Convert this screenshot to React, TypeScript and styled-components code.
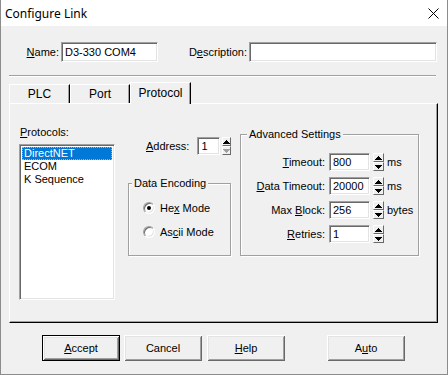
import React from 'react';
import styled, { createGlobalStyle, css } from 'styled-components';

const GlobalStyle = createGlobalStyle`
  html, body { margin: 0; padding: 0; background: #f0f0f0; }
  body { font-family: "Liberation Sans", Arial, sans-serif; font-size: 11px; color: #000; }
  * { box-sizing: border-box; }
  u { text-decoration: underline; text-underline-offset: 1px; }
`;

const Window = styled.div`
  width: 448px;
  height: 375px;
  display: flex;
  flex-direction: column;
  background: #f0f0f0;
  border: 1px solid #8c8c8c;
  border-top: none;
  overflow: hidden;
`;

const TitleBar = styled.div`
  height: 26px;
  flex: none;
  background: #fff;
  display: flex;
  align-items: center;
  padding-left: 4px;
`;

const Title = styled.span`
  font-family: "Noto Sans", "Open Sans", sans-serif;
  font-size: 12px;
  color: #000;
`;

const CloseGlyph = styled.svg`
  margin-left: auto;
  margin-right: 8px;
`;

const NameRow = styled.div`
  margin-top: 16px;
  padding-left: 24px;
  display: grid;
  grid-template-columns: 36px 97px 91px 188px;
  align-items: center;
`;

const FieldLabel = styled.label`
  text-align: right;
  padding-right: 2px;
  line-height: 20px;
  white-space: nowrap;
`;

const TextBox = styled.div<{ $w?: number; $h?: number }>`
  width: ${p => (p.$w ? `${p.$w}px` : '100%')};
  height: ${p => p.$h ?? 20}px;
  background: #fff;
  border: 1px solid;
  border-color: #a0a0a0 #fff #fff #a0a0a0;
  box-shadow: inset 1px 1px #696969, inset -1px -1px #e3e3e3;
  padding: 0 3px;
  display: flex;
  align-items: center;
  white-space: nowrap;
`;

const Separator = styled.div`
  margin: 13px 0 0 8px;
  width: 427px;
  height: 2px;
  border-top: 1px solid #a0a0a0;
  border-bottom: 1px solid #fff;
`;

const TabStrip = styled.div`
  margin: 5px 0 0 8px;
  height: 21px;
  display: flex;
  align-items: flex-end;
`;

const Tab = styled.div<{ $active?: boolean; $w: number }>`
  width: ${p => p.$w}px;
  height: 19px;
  background: #f0f0f0;
  border-top: 1px solid #fff;
  border-left: 1px solid #fff;
  border-right: 1px solid #000;
  box-shadow: inset -1px 0 #a0a0a0;
  font-size: 12px;
  display: flex;
  align-items: center;
  justify-content: center;
  ${p =>
    p.$active &&
    css`
      height: 22px;
      margin-bottom: -1px;
      position: relative;
      z-index: 1;
      padding-bottom: 2px;
    `}
`;

const Panel = styled.div`
  margin-left: 8px;
  width: 429px;
  height: 220px;
  flex: none;
  border: 1px solid;
  border-color: #fff #000 #000 #fff;
  box-shadow: inset -1px -1px #a0a0a0;
  padding-left: 9px;
  display: flex;
  align-items: flex-start;
`;

const ProtocolColumn = styled.div`
  width: 96px;
  padding-top: 22px;
  display: flex;
  flex-direction: column;
`;

const ColumnLabel = styled.div`
  line-height: 13px;
  padding-left: 1px;
`;

const ListBox = styled.div`
  margin-top: 5px;
  height: 156px;
  background: #fff;
  border: 1px solid;
  border-color: #a0a0a0 #fff #fff #a0a0a0;
  box-shadow: inset 1px 1px #696969, inset -1px -1px #e3e3e3;
  padding: 2px;
`;

const ListItem = styled.div<{ $selected?: boolean }>`
  height: 13px;
  line-height: 13px;
  padding-left: 2px;
  white-space: nowrap;
  ${p =>
    p.$selected &&
    css`
      background: #0078d7;
      color: #fff;
      outline: 1px dotted #ff9a4a;
      outline-offset: -1px;
    `}
`;

const MiddleColumn = styled.div`
  width: 103px;
  margin-left: 13px;
  padding-top: 33px;
  display: flex;
  flex-direction: column;
`;

const AddressRow = styled.div`
  margin-left: 18px;
  display: flex;
  align-items: center;
  white-space: nowrap;
`;

const InlineLabel = styled.span`
  margin-right: 8px;
`;

const GroupBox = styled.fieldset<{ $w: number; $pl: number; $pt: number; $pb: number }>`
  margin: 0;
  min-width: 0;
  width: ${p => p.$w}px;
  padding: ${p => `${p.$pt}px 0 ${p.$pb}px ${p.$pl}px`};
  border: 1px solid #a0a0a0;
  box-shadow: inset 1px 1px #fff, 1px 1px #fff;
`;

const GroupTitle = styled.legend`
  padding: 0 2px;
  line-height: 13px;
  background: #f0f0f0;
  white-space: nowrap;
`;

const EncodingGroup = styled(GroupBox)`
  margin-top: 22px;
`;

const AdvancedGroup = styled(GroupBox)`
  margin-left: 9px;
  margin-top: 24px;
`;

const RadioList = styled.div`
  margin-left: 11px;
  display: flex;
  flex-direction: column;
  gap: 10px;
`;

const RadioRow = styled.div`
  height: 14px;
  display: flex;
  align-items: center;
  gap: 5px;
  white-space: nowrap;
`;

const RadioCircle = styled.span<{ $checked?: boolean }>`
  width: 12px;
  height: 12px;
  flex: none;
  border-radius: 50%;
  background: #fff;
  position: relative;
  border: 1px solid;
  border-color: #a0a0a0 #fff #fff #a0a0a0;
  box-shadow: inset 1px 1px #696969, inset -1px -1px #e3e3e3;
  ${p =>
    p.$checked &&
    css`
      &::after {
        content: '';
        position: absolute;
        left: 3px;
        top: 3px;
        width: 4px;
        height: 4px;
        border-radius: 50%;
        background: #000;
      }
    `}
`;

const SettingsGrid = styled.div`
  display: grid;
  grid-template-columns: 82px 41px 14px auto;
  grid-auto-rows: 18px;
  row-gap: 6px;
  align-items: center;
`;

const SettingLabel = styled.span`
  text-align: right;
  padding-right: 4px;
  white-space: nowrap;
`;

const Unit = styled.span`
  padding-left: 3px;
`;

const SpinBox = styled.div<{ $gap?: number }>`
  width: 11px;
  height: 18px;
  margin-left: ${p => p.$gap ?? 0}px;
  justify-self: end;
  display: flex;
  flex-direction: column;
`;

const SpinHalf = styled.div`
  flex: 1;
  display: flex;
  align-items: center;
  justify-content: center;
  background: #f0f0f0;
  border: 1px solid;
  border-color: #fff #696969 #696969 #fff;
`;

const ButtonRow = styled.div`
  margin-top: 12px;
  padding-left: 41px;
  display: flex;
`;

const Button = styled.button<{ $default?: boolean; $gap?: number }>`
  width: 78px;
  height: 26px;
  margin: 0 0 0 ${p => p.$gap ?? 0}px;
  padding: 0;
  font: inherit;
  color: #000;
  background: #f0f0f0;
  border: none;
  box-shadow: inset 1px 1px #fff, inset -1px -1px #696969, inset 2px 2px #e3e3e3, inset -2px -2px #a0a0a0;
  ${p =>
    p.$default &&
    css`
      border: 1px solid #000;
    `}
`;

const Arrow: React.FC<{ dir: 'up' | 'down'; disabled?: boolean }> = ({ dir, disabled }) => (
  <svg width="7" height="4" viewBox="0 0 7 4" shapeRendering="crispEdges" fill={disabled ? '#a0a0a0' : '#000'}>
    {dir === 'up' ? (
      <path d="M3 0h1v1H3zM2 1h3v1H2zM1 2h5v1H1zM0 3h7v1H0z" />
    ) : (
      <path d="M0 0h7v1H0zM1 1h5v1H1zM2 2h3v1H2zM3 3h1v1H3z" />
    )}
  </svg>
);

const Spinner: React.FC<{ gap?: number; downDisabled?: boolean }> = ({ gap, downDisabled }) => (
  <SpinBox $gap={gap}>
    <SpinHalf>
      <Arrow dir="up" />
    </SpinHalf>
    <SpinHalf>
      <Arrow dir="down" disabled={downDisabled} />
    </SpinHalf>
  </SpinBox>
);

const settings: { label: React.ReactNode; value: string; unit?: string }[] = [
  { label: <><u>T</u>imeout:</>, value: '800', unit: 'ms' },
  { label: <><u>D</u>ata Timeout:</>, value: '20000', unit: 'ms' },
  { label: <>Max <u>B</u>lock:</>, value: '256', unit: 'bytes' },
  { label: <><u>R</u>etries:</>, value: '1' },
];

export default function App() {
  return (
    <>
      <GlobalStyle />
      <Window>
        <TitleBar>
          <Title>Configure Link</Title>
          <CloseGlyph width="11" height="11" viewBox="0 0 11 11">
            <path d="M0.5 0.5L10.5 10.5M10.5 0.5L0.5 10.5" stroke="#000" strokeWidth="1" />
          </CloseGlyph>
        </TitleBar>

        <NameRow>
          <FieldLabel><u>N</u>ame:</FieldLabel>
          <TextBox>D3-330 COM4</TextBox>
          <FieldLabel>D<u>e</u>scription:</FieldLabel>
          <TextBox />
        </NameRow>

        <Separator />

        <TabStrip>
          <Tab $w={61}>PLC</Tab>
          <Tab $w={60}>Port</Tab>
          <Tab $w={61} $active>Protocol</Tab>
        </TabStrip>

        <Panel>
          <ProtocolColumn>
            <ColumnLabel><u>P</u>rotocols:</ColumnLabel>
            <ListBox>
              <ListItem $selected>DirectNET</ListItem>
              <ListItem>ECOM</ListItem>
              <ListItem>K Sequence</ListItem>
            </ListBox>
          </ProtocolColumn>

          <MiddleColumn>
            <AddressRow>
              <InlineLabel><u>A</u>ddress:</InlineLabel>
              <TextBox $w={29} $h={18}>1</TextBox>
              <Spinner gap={2} downDisabled />
            </AddressRow>
            <EncodingGroup $w={103} $pl={3} $pt={11} $pb={16}>
              <GroupTitle>Data Encoding</GroupTitle>
              <RadioList>
                <RadioRow>
                  <RadioCircle $checked />
                  <span>He<u>x</u> Mode</span>
                </RadioRow>
                <RadioRow>
                  <RadioCircle />
                  <span>As<u>c</u>ii Mode</span>
                </RadioRow>
              </RadioList>
            </EncodingGroup>
          </MiddleColumn>

          <AdvancedGroup $w={179} $pl={6} $pt={12} $pb={12}>
            <GroupTitle>Advanced Settings</GroupTitle>
            <SettingsGrid>
              {settings.map((s, i) => (
                <React.Fragment key={i}>
                  <SettingLabel>{s.label}</SettingLabel>
                  <TextBox $h={18}>{s.value}</TextBox>
                  <Spinner />
                  <Unit>{s.unit ?? ''}</Unit>
                </React.Fragment>
              ))}
            </SettingsGrid>
          </AdvancedGroup>
        </Panel>

        <ButtonRow>
          <Button $default><u>A</u>ccept</Button>
          <Button $gap={4}>Cancel</Button>
          <Button $gap={5}><u>H</u>elp</Button>
          <Button $gap={42}>A<u>u</u>to</Button>
        </ButtonRow>
      </Window>
    </>
  );
}
